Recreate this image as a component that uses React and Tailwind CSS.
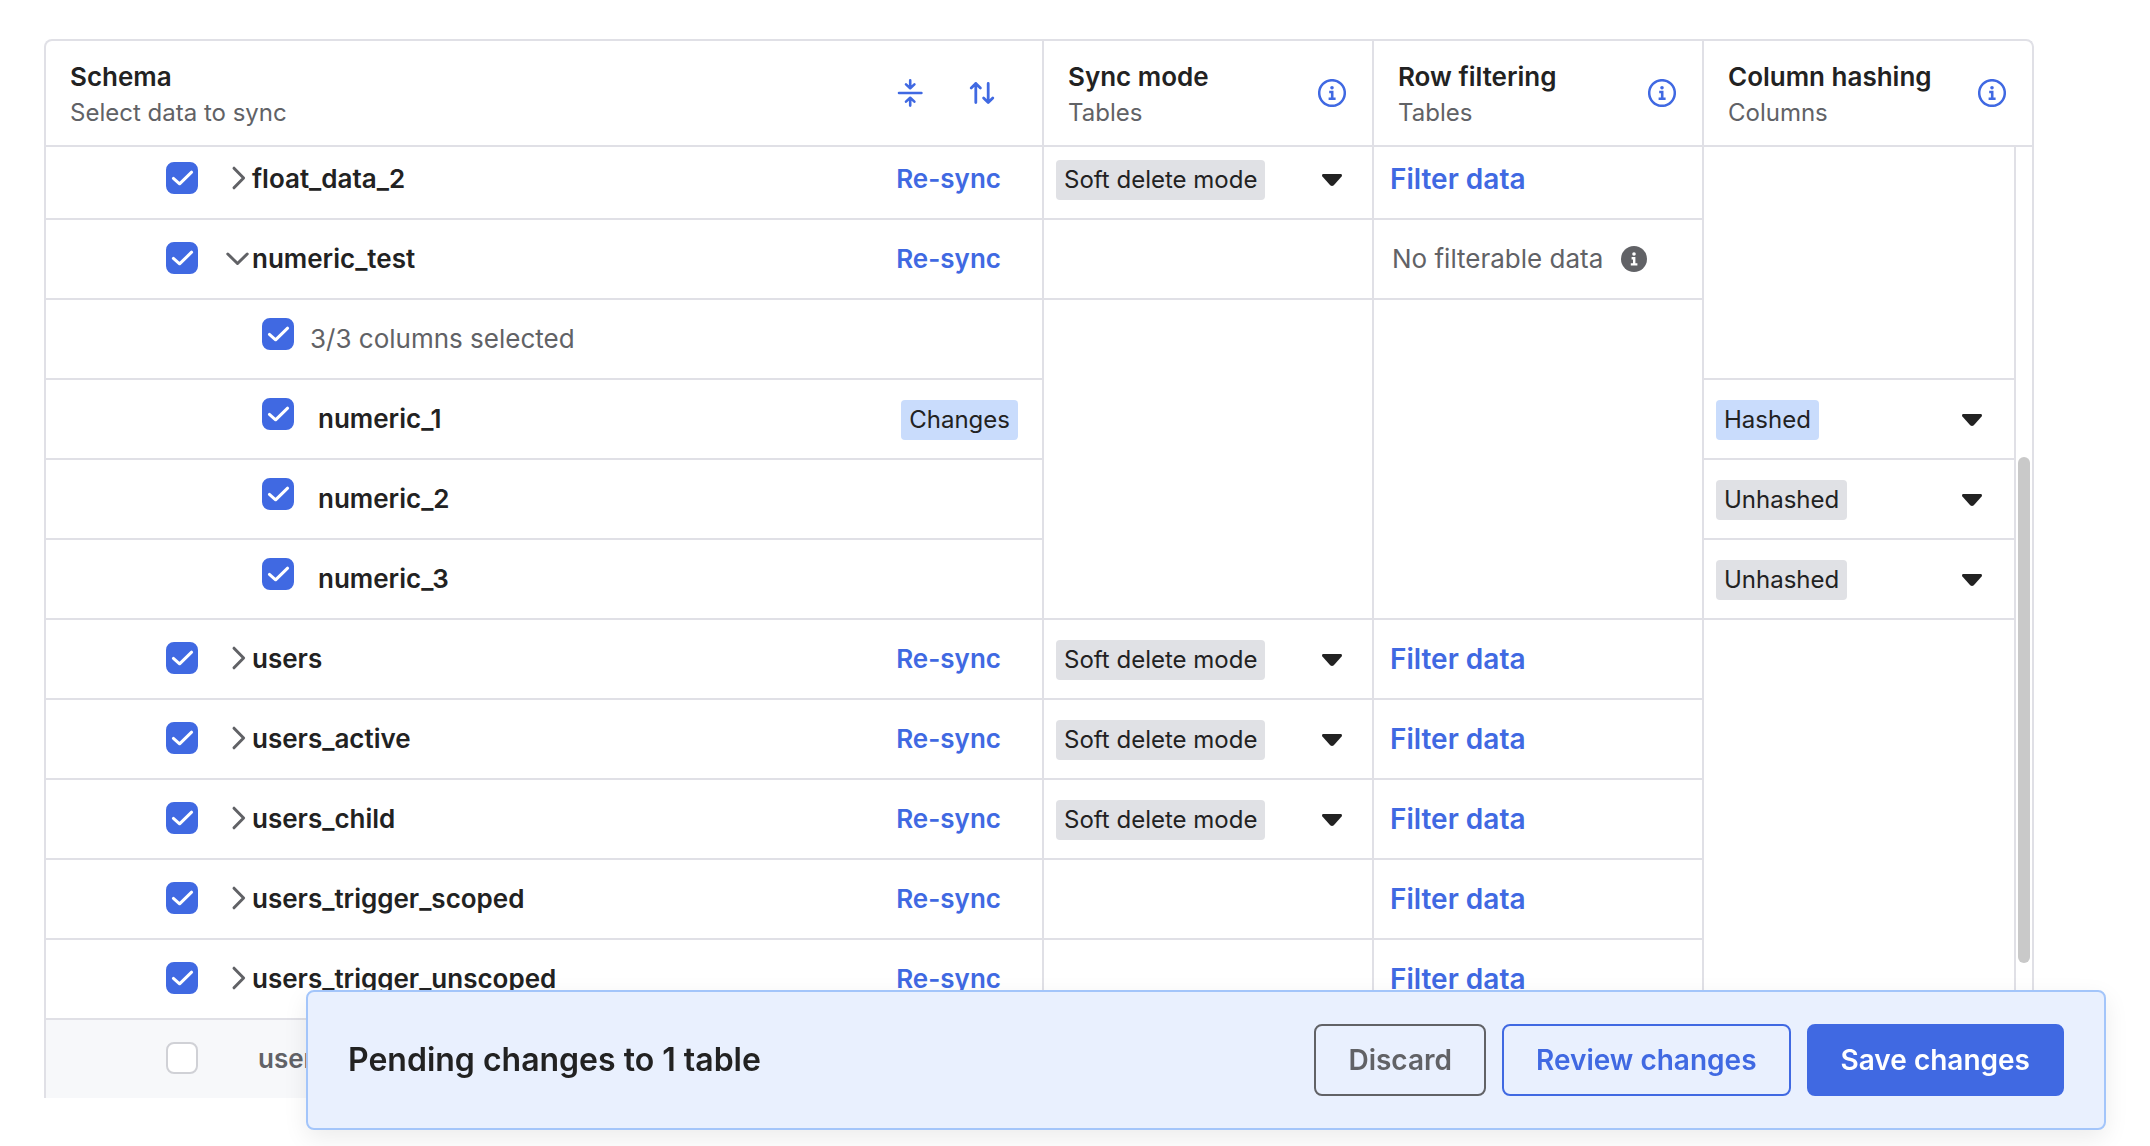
import { useState } from 'react';

const tables = [
  { name: 'float_data_2', mode: true, filter: true },
  { name: 'numeric_test', open: true, columns: ['numeric_1', 'numeric_2', 'numeric_3'] },
  { name: 'users', mode: true, filter: true },
  { name: 'users_active', mode: true, filter: true },
  { name: 'users_child', mode: true, filter: true },
  { name: 'users_trigger_scoped', filter: true },
  { name: 'users_trigger_unscoped', filter: true },
];

function Checkbox({ id, label, checked, onChange }) {
  return (
    <span className="relative block size-8 shrink-0">
      <input
        id={id}
        type="checkbox"
        aria-label={label}
        checked={checked}
        onChange={onChange}
        className="block size-8 appearance-none rounded-lg border-2 border-[#d0d1d6] bg-white checked:border-[#4069e2] checked:bg-[#4069e2]"
      />
      {checked && (
        <svg viewBox="0 0 32 32" className="pointer-events-none absolute inset-0 size-8" fill="none" stroke="white" strokeWidth="3" strokeLinecap="round" strokeLinejoin="round">
          <path d="M7.4 16.4 13.6 21.8 25.6 10.2" />
        </svg>
      )}
    </span>
  );
}

function InfoOutline() {
  return (
    <svg viewBox="0 0 28 28" className="size-7" fill="none" stroke="#4069e2">
      <circle cx="14" cy="14" r="12.8" strokeWidth="2.5" />
      <circle cx="14" cy="8.8" r="1.8" fill="#4069e2" stroke="none" />
      <path d="M11.2 13h3v6.4M10.6 19.8h7" strokeWidth="2.6" />
    </svg>
  );
}

function InfoSolid() {
  return (
    <svg viewBox="0 0 26 26" className="size-[26px]" fill="none" stroke="white">
      <circle cx="13" cy="13" r="13" fill="#616266" stroke="none" />
      <circle cx="13" cy="8" r="1.8" fill="white" stroke="none" />
      <path d="M10.6 12.2h2.6v6M9.8 18.4h6.6" strokeWidth="2.4" />
    </svg>
  );
}

function Caret() {
  return (
    <svg viewBox="0 0 20 12" className="pointer-events-none h-3 w-5 shrink-0" fill="#222222">
      <path d="M1 0h18q1.6.8.6 2.4l-7.8 8.8q-1.8 1.5-3.6 0L.4 2.4Q-.6.8 1 0Z" />
    </svg>
  );
}

function BadgeSelect({ label, value, options, onChange, highlight }) {
  return (
    <div className="flex items-center justify-between pt-0.5">
      <select
        aria-label={label}
        value={value}
        onChange={onChange}
        className={`field-sizing-content h-10 appearance-none rounded px-2 text-2xl ${highlight ? 'bg-[#c9dcfc]' : 'bg-[#e0e1e5]'}`}
      >
        {options.map(o => <option key={o}>{o}</option>)}
      </select>
      <Caret />
    </div>
  );
}

function HeadCell({ title, sub, span }) {
  return (
    <th colSpan={span} className="h-[106px] border-b-2 border-l-2 border-[#e0e0e6] pr-[26px] pl-6 text-left font-normal">
      <div className="flex items-center justify-between">
        <div className="pt-1">
          <div className="text-[26px] leading-9 font-semibold">{title}</div>
          <div className="text-2xl leading-9 text-[#616266]">{sub}</div>
        </div>
        <button aria-label={`About ${title}`}><InfoOutline /></button>
      </div>
    </th>
  );
}

export default function App() {
  const [unchecked, setUnchecked] = useState({ users_off: true });
  const [hashing, setHashing] = useState({ numeric_1: 'Hashed', numeric_2: 'Unhashed', numeric_3: 'Unhashed' });

  const toggle = (id) => setUnchecked({ ...unchecked, [id]: !unchecked[id] });

  const tableRow = (t, i) => (
    <tr key={t.name} className={i === 0 ? 'h-[73px]' : 'h-20'}>
      <td className={`border-b-2 border-[#e0e0e6] pr-6 pl-[120px] ${i === 0 ? 'pb-2' : ''}`}>
        <div className="flex items-center">
          <div className="pb-0.5"><Checkbox id={t.name} checked={!unchecked[t.name]} onChange={() => toggle(t.name)} /></div>
          <button aria-label={`Expand ${t.name}`} className="ml-[26px] flex w-7 justify-center pb-0.5">
            <svg viewBox="0 0 24 24" className="size-6" fill="none" stroke="#616266" strokeWidth="3" strokeLinecap="round" strokeLinejoin="round">
              <path d={t.open ? 'M1.8 8 11.5 17.5 21.2 8' : 'M8 2.2 17.6 12 8 21.8'} />
            </svg>
          </button>
          <label htmlFor={t.name} className="text-[26px] leading-9 font-semibold">{t.name}</label>
          <button className="ml-auto px-[17px] text-[26px] leading-9 font-semibold text-[#4069e2]">Re-sync</button>
        </div>
      </td>
      <td className={`border-b-2 border-l-2 border-[#e0e0e6] pr-[30px] pl-3 ${i === 0 ? 'pb-2' : ''}`}>
        {t.mode && <BadgeSelect label={`Sync mode for ${t.name}`} options={['Soft delete mode']} />}
      </td>
      <td className={`border-b-2 border-l-2 border-[#e0e0e6] pl-4 ${i === 0 ? 'pb-2' : ''}`}>
        {t.filter
          ? <button className="block text-[28px] leading-9 font-semibold text-[#4069e2]">Filter data</button>
          : (
            <div className="flex items-center gap-[18px] pl-0.5 text-[26px] leading-9 text-[#616266]">
              No filterable data <InfoSolid />
            </div>
          )}
      </td>
      {i === 0 && <td rowSpan={3} className="border-b-2 border-l-2 border-[#e0e0e6]" />}
      {i === 0 && (
        <td rowSpan={12} className="border-l-2 border-[#e0e0e6] px-0.5 pb-[135px] align-bottom">
          <div className="h-[506px] rounded-full bg-[#c9c9c9]" />
        </td>
      )}
      {i === 2 && <td rowSpan={6} className="border-l-2 border-[#e0e0e6]" />}
    </tr>
  );

  const columnRows = (t) => [
    <tr key="all" className="h-20">
      <td className="border-b-2 border-[#e0e0e6] pl-[216px]">
        <div className="flex items-center gap-4">
          <div className="pb-2.5"><Checkbox id="all" checked={!unchecked.all} onChange={() => toggle('all')} /></div>
          <label htmlFor="all" className="text-[26px] leading-9 text-[#616266]">3/3 columns selected</label>
        </div>
      </td>
      <td rowSpan={4} className="border-b-2 border-l-2 border-[#e0e0e6]" />
      <td rowSpan={4} className="border-b-2 border-l-2 border-[#e0e0e6]" />
    </tr>,
    ...t.columns.map(c => (
      <tr key={c} className="h-20">
        <td className="border-b-2 border-[#e0e0e6] pr-6 pl-[216px]">
          <div className="flex items-center gap-6">
            <div className="pb-2.5"><Checkbox id={c} checked={!unchecked[c]} onChange={() => toggle(c)} /></div>
            <label htmlFor={c} className="text-[26px] leading-9 font-semibold">{c}</label>
            {hashing[c] === 'Hashed' && (
              <div className="ml-auto pt-0.5">
                <span className="block rounded bg-[#c9dcfc] px-2 text-2xl leading-10">Changes</span>
              </div>
            )}
          </div>
        </td>
        <td className="border-b-2 border-l-2 border-[#e0e0e6] pr-8 pl-3">
          <BadgeSelect
            label={`Hashing for ${c}`}
            value={hashing[c]}
            options={['Hashed', 'Unhashed']}
            onChange={e => setHashing({ ...hashing, [c]: e.target.value })}
            highlight={hashing[c] === 'Hashed'}
          />
        </td>
      </tr>
    )),
  ];

  return (
    <div className="min-h-screen bg-white pt-[39px] pr-[116px] pl-11 font-['Inter',sans-serif] text-[#222222]">
      <div className="overflow-hidden rounded-t-lg border-2 border-b-0 border-[#e0e0e6]">
        <table className="w-full table-fixed border-separate border-spacing-0">
          <colgroup>
            <col />
            <col className="w-[330px]" />
            <col className="w-[330px]" />
            <col className="w-[312px]" />
            <col className="w-[18px]" />
          </colgroup>
          <thead>
            <tr>
              <th className="h-[106px] border-b-2 border-[#e0e0e6] pr-[47px] pl-6 text-left font-normal">
                <div className="flex items-center">
                  <div className="mr-auto pt-1">
                    <div className="text-[26px] leading-9 font-semibold">Schema</div>
                    <div className="text-2xl leading-9 text-[#616266]">Select data to sync</div>
                  </div>
                  <button aria-label="Collapse all" className="mr-[46px]">
                    <svg viewBox="0 0 26 28" className="h-7 w-[26px]" fill="none" stroke="#4069e2" strokeWidth="2.6" strokeLinecap="round" strokeLinejoin="round">
                      <path d="M2 14h22.4M13.2 1.4v7.6M9 5.4 13.2 9.2l4.2-3.8M13.2 26.6V19M9 22.6l4.2-3.8 4.2 3.8" />
                    </svg>
                  </button>
                  <button aria-label="Sort">
                    <svg viewBox="0 0 26 28" className="h-7 w-[26px]" fill="none" stroke="#4069e2" strokeWidth="2.8" strokeLinecap="round" strokeLinejoin="round">
                      <path d="M6.8 23.6V4.4M2.2 9 6.8 4.4l4.6 4.6M19.2 4.4v19.2M14.6 19l4.6 4.6 4.6-4.6" />
                    </svg>
                  </button>
                </div>
              </th>
              <HeadCell title="Sync mode" sub="Tables" />
              <HeadCell title="Row filtering" sub="Tables" />
              <HeadCell title="Column hashing" sub="Columns" span={2} />
            </tr>
          </thead>
          <tbody>
            {tables.map((t, i) => (t.open ? [tableRow(t, i), ...columnRows(t)] : tableRow(t, i)))}
            <tr className="h-[78px] bg-[#f7f8fa]">
              <td className="pl-[120px]">
                <div className="flex items-center">
                  <div className="pb-0.5"><Checkbox id="users_off" checked={!unchecked.users_off} onChange={() => toggle('users_off')} /></div>
                  <label htmlFor="users_off" className="ml-[60px] text-[26px] leading-9 font-semibold text-[#616266]">users</label>
                </div>
              </td>
              <td className="border-l-2 border-[#e0e0e6]" />
              <td className="border-l-2 border-[#e0e0e6]" />
            </tr>
          </tbody>
        </table>
      </div>

      <div className="fixed right-11 bottom-4 left-[306px] flex h-[140px] items-center gap-4 rounded-lg border-2 border-[#a3c5fa] bg-[#e9f0fe] px-10 shadow-[0_8px_24px_rgba(0,0,0,0.08)]">
        <h2 className="mr-auto text-[32px] font-semibold">Pending changes to 1 table</h2>
        <button className="h-[72px] rounded-lg border-2 border-[#616266] px-8 text-[28px] font-semibold text-[#616266]">Discard</button>
        <button className="h-[72px] rounded-lg border-2 border-[#4069e2] px-8 text-[28px] font-semibold text-[#4069e2]">Review changes</button>
        <button className="h-[72px] rounded-lg border-2 border-[#4069e2] bg-[#4069e2] px-8 text-[28px] font-semibold text-white">Save changes</button>
      </div>
    </div>
  );
}
